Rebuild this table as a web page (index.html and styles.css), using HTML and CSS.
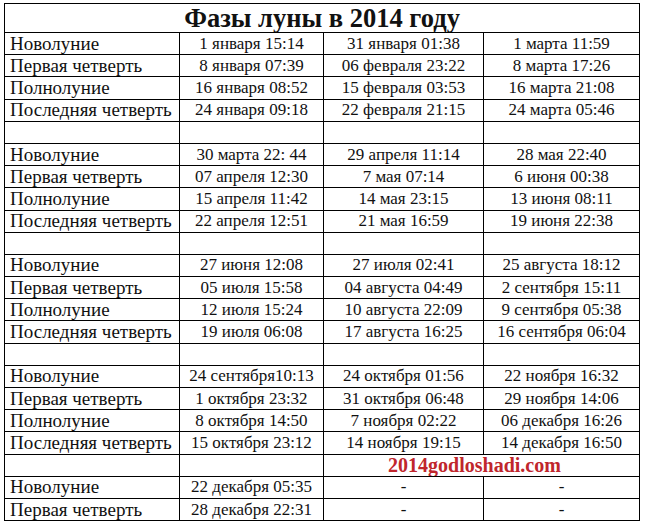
FILE: index.html
```html
<!DOCTYPE html>
<html lang="ru">
<head>
<meta charset="utf-8">
<title>Фазы луны в 2014 году</title>
<link rel="stylesheet" href="styles.css">
</head>
<body>
<table class="moon">
<colgroup>
<col class="c-label"><col class="c-a"><col class="c-b"><col class="c-c">
</colgroup>
<tr class="title-row"><th colspan="4" class="title">Фазы луны в 2014 году</th></tr>
<tr><td class="label">Новолуние</td><td>1 января 15:14</td><td>31 января 01:38</td><td>1 марта 11:59</td></tr>
<tr><td class="label">Первая четверть</td><td>8 января 07:39</td><td>06 февраля 23:22</td><td>8 марта 17:26</td></tr>
<tr><td class="label">Полнолуние</td><td>16 января 08:52</td><td>15 февраля 03:53</td><td>16 марта 21:08</td></tr>
<tr><td class="label">Последняя четверть</td><td>24 января 09:18</td><td>22 февраля 21:15</td><td>24 марта 05:46</td></tr>
<tr><td class="label"></td><td></td><td></td><td></td></tr>
<tr><td class="label">Новолуние</td><td>30 марта 22: 44</td><td>29 апреля 11:14</td><td>28 мая 22:40</td></tr>
<tr><td class="label">Первая четверть</td><td>07 апреля 12:30</td><td>7 мая 07:14</td><td>6 июня 00:38</td></tr>
<tr><td class="label">Полнолуние</td><td>15 апреля 11:42</td><td>14 мая 23:15</td><td>13 июня 08:11</td></tr>
<tr><td class="label">Последняя четверть</td><td>22 апреля 12:51</td><td>21 мая 16:59</td><td>19 июня 22:38</td></tr>
<tr><td class="label"></td><td></td><td></td><td></td></tr>
<tr><td class="label">Новолуние</td><td>27 июня 12:08</td><td>27 июля 02:41</td><td>25 августа 18:12</td></tr>
<tr><td class="label">Первая четверть</td><td>05 июля 15:58</td><td>04 августа 04:49</td><td>2 сентября 15:11</td></tr>
<tr><td class="label">Полнолуние</td><td>12 июля 15:24</td><td>10 августа 22:09</td><td>9 сентября 05:38</td></tr>
<tr><td class="label">Последняя четверть</td><td>19 июля 06:08</td><td>17 августа 16:25</td><td>16 сентября 06:04</td></tr>
<tr><td class="label"></td><td></td><td></td><td></td></tr>
<tr><td class="label">Новолуние</td><td>24 сентября10:13</td><td>24 октября 01:56</td><td>22 ноября 16:32</td></tr>
<tr><td class="label">Первая четверть</td><td>1 октября 23:32</td><td>31 октября 06:48</td><td>29 ноября 14:06</td></tr>
<tr><td class="label">Полнолуние</td><td>8 октября 14:50</td><td>7 ноября 02:22</td><td>06 декабря 16:26</td></tr>
<tr><td class="label">Последняя четверть</td><td>15 октября 23:12</td><td>14 ноября 19:15</td><td>14 декабря 16:50</td></tr>
<tr><td class="label"></td><td></td><td colspan="2" class="mark">2014godloshadi.com</td></tr>
<tr><td class="label">Новолуние</td><td>22 декабря 05:35</td><td>-</td><td>-</td></tr>
<tr><td class="label">Первая четверть</td><td>28 декабря 22:31</td><td>-</td><td>-</td></tr>
</table>
</body>
</html>
```
FILE: styles.css
```css
html, body {
  margin: 0;
  padding: 0;
  background: #fff;
}
body {
  padding: 3px 0 0 4px;
  font-family: "Liberation Serif", "Times New Roman", serif;
  color: #111;
}
.moon {
  border-collapse: collapse;
  table-layout: fixed;
  width: 635px;
}
.c-label { width: 175px; }
.c-a { width: 144px; }
.c-b { width: 160px; }
.c-c { width: 156px; }
.moon td, .moon th {
  font-family: "Liberation Serif", "Times New Roman", serif;
  border: 1.5px solid #000;
  padding: 0;
  height: 21.2px;
  text-align: center;
  font-size: 17px;
  line-height: 20px;
  white-space: nowrap;
  overflow: hidden;
}
.moon .title-row th {
  height: 28px;
  font-size: 26.5px;
  font-weight: bold;
  line-height: 28px;
}
.moon td.label {
  text-align: left;
  padding-left: 5px;
  font-size: 19px;
}
.moon td.mark {
  color: #c0262c;
  font-weight: bold;
  font-size: 20px;
  padding-right: 14px;
}
```
